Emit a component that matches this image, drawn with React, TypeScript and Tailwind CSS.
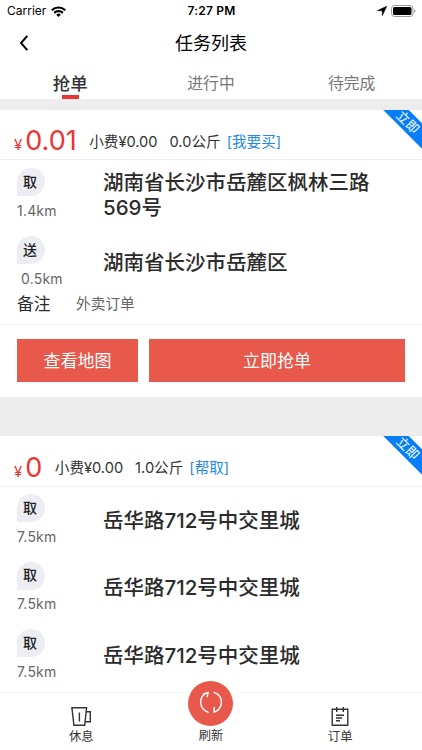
import { useState } from 'react';
import clsx from 'clsx';

type Stop = {
    kind: string;
    distance: string;
    address: string;
};

type Order = {
    id: number;
    price: string;
    tip: string;
    weight: string;
    type: string;
    stops: Stop[];
    remark?: string;
};

const TABS = ['抢单', '进行中', '待完成'];

const ORDERS: Order[] = [
    {
        id: 1,
        price: '0.01',
        tip: '0.00',
        weight: '0.0',
        type: '我要买',
        stops: [
            { kind: '取', distance: '1.4km', address: '湖南省长沙市岳麓区枫林三路569号' },
            { kind: '送', distance: '0.5km', address: '湖南省长沙市岳麓区' },
        ],
        remark: '外卖订单',
    },
    {
        id: 2,
        price: '0',
        tip: '0.00',
        weight: '1.0',
        type: '帮取',
        stops: [
            { kind: '取', distance: '7.5km', address: '岳华路712号中交里城' },
            { kind: '取', distance: '7.5km', address: '岳华路712号中交里城' },
            { kind: '取', distance: '7.5km', address: '岳华路712号中交里城' },
        ],
    },
];

function StatusBar() {
    return (
        <div className="grid h-[22px] shrink-0 grid-cols-3 items-center pl-[7px] pr-[6px] text-black">
            <div className="flex items-center gap-[5px] text-[12px] leading-[22px]">
                Carrier
                <svg width="15" height="11" viewBox="0 0 15 11" fill="none" stroke="currentColor" strokeWidth="2.2">
                    <path d="M0.8 4.2a9.6 9.6 0 0 1 13.4 0" />
                    <path d="M3.2 6.9a6.1 6.1 0 0 1 8.6 0" />
                    <path d="M7.5 11 5.2 8.7a3.2 3.2 0 0 1 4.6 0Z" fill="currentColor" stroke="none" />
                </svg>
            </div>
            <div className="text-center text-[12px] font-semibold leading-[22px] tracking-[0.2px]">7:27 PM</div>
            <div className="flex items-center justify-end gap-[4px]">
                <svg width="10" height="10" viewBox="0 0 10 10" fill="currentColor">
                    <path d="M9.7 0.3 5.4 9.6 5.2 4.8 0.4 4.6Z" stroke="currentColor" strokeWidth="0.6" />
                </svg>
                <svg width="25" height="12" viewBox="0 0 25 12">
                    <rect x="0.5" y="0.5" width="21.5" height="11" rx="3" fill="none" stroke="#999" />
                    <rect x="2" y="2" width="18.5" height="8" rx="1.6" fill="#000" />
                    <path d="M23.2 4v4a2.2 2.2 0 0 0 0-4Z" fill="#999" />
                </svg>
            </div>
        </div>
    );
}

function StopRow({ stop, tall }: { stop: Stop; tall: boolean }) {
    return (
        <div className={clsx('flex', tall ? 'h-[68px]' : 'h-[67.5px]')}>
            <div className="w-[86px] shrink-0">
                <div className="flex h-7 w-7 items-center justify-center rounded-full rounded-bl-[3px] bg-[#edeef3] pb-[2px] pr-[2px] text-[14px] font-medium text-[#222]">
                    {stop.kind}
                </div>
                <div
                    className={clsx(
                        'text-[14px] leading-[20px] tracking-[0.2px] text-[#666]',
                        tall ? 'mt-[5px]' : 'mt-[4.5px]',
                        stop.kind === '送' && 'pl-[4px]'
                    )}
                >
                    {stop.distance}
                </div>
            </div>
            <div className={clsx('w-[275px] text-[20.5px] font-medium leading-[25px] text-[#2b2b2b]', stop.address.length > 13 ? 'pt-[2px]' : 'pt-[13.5px]')}>
                {stop.address}
            </div>
        </div>
    );
}

function OrderCard({ order }: { order: Order }) {
    const hasRemark = Boolean(order.remark);

    return (
        <div className="relative shrink-0 overflow-hidden bg-white">
            <div className={clsx('flex items-center border-b border-[#eee] pl-[14px] pt-[13px]', hasRemark ? 'h-[50px]' : 'h-[51px]')}>
                <div className="flex items-baseline text-[#ed3434]">
                    <span className="mr-[3px] text-[15px]">¥</span>
                    <span className="text-[27px] leading-[36px]">{order.price}</span>
                </div>
                <div className="ml-[12.5px] flex gap-[12px] whitespace-nowrap pt-[3px] text-[14.6px] text-[#333]">
                    <span>小费¥{order.tip}</span>
                    <span>{order.weight}公斤</span>
                </div>
                <span className="ml-[6px] pt-[3px] text-[14.6px] text-[#2289e8]">[{order.type}]</span>
            </div>

            {/* corner ribbon */}
            <div className="absolute right-[-28px] top-[3px] flex h-[18px] w-[84px] rotate-45 items-center justify-center bg-[#087dfa] text-[13px] leading-[13px] text-white">
                立即
            </div>

            <div className={clsx('px-[17px]', hasRemark ? 'pt-2' : 'pt-[7px]')}>
                {order.stops.map((stop, i) => (
                    <StopRow key={i} stop={stop} tall={hasRemark} />
                ))}
            </div>

            {hasRemark && (
                <>
                    <div className="-mt-[11px] flex h-[23px] items-center pl-[17px]">
                        <span className="w-[59px] text-[16.8px] text-[#2b2b2b]">备注</span>
                        <span className="text-[14.7px] text-[#666]">{order.remark}</span>
                    </div>
                    <div className="mt-[8px] flex gap-[11px] border-t border-[#f3f3f3] px-[17px] pb-[15px] pt-[14px]">
                        <button className="h-[43px] w-[121px] bg-[#e8584b] pt-[2px] text-[17px] text-white">查看地图</button>
                        <button className="h-[43px] flex-1 bg-[#e8584b] pt-[2px] text-[17px] text-white">立即抢单</button>
                    </div>
                </>
            )}
        </div>
    );
}

function BottomBar() {
    return (
        <div className="relative grid h-[58px] shrink-0 grid-cols-3 border-t border-[#f2f2f2] bg-white text-[12.3px] leading-[18px] text-[#333]">
            <button className="flex flex-col items-center pl-[22px] pt-[13px]">
                <svg width="22" height="21" viewBox="0 0 22 21" fill="none" stroke="#333" strokeWidth="1.4">
                    <path d="M1.9 1.7H16.6L14.7 19.3H3.9Z" />
                    <path d="M16.1 5.7H20.3V15.8H15.2M9.4 6.5v9" />
                </svg>
                <span className="mt-[1px]">休息</span>
            </button>
            <button className="flex flex-col items-center">
                <span className="-mt-[18px] flex h-[56px] w-[56px] items-center justify-center rounded-full bg-white">
                    <span className="flex h-[45px] w-[45px] items-center justify-center rounded-full bg-[#e8584b]">
                        <svg width="24" height="24" viewBox="0 0 24 24" fill="none" stroke="#fff" strokeWidth="1.4" strokeLinecap="round" strokeLinejoin="round">
                            <path d="M9.2 21.3C-0.8 17.5-0.8 4.5 9.2 1.3M4.4 3 9.2 1.3 8.2 5.6" />
                            <path d="M15 1.3C24.8 4.5 24.8 17.5 15 21.3M15.3 16.4 15 21.3 19.5 19" />
                        </svg>
                    </span>
                </span>
                <span className="-mt-[4px]">刷新</span>
            </button>
            <button className="flex flex-col items-center pr-[23px] pt-[13px]">
                <svg width="18" height="21" viewBox="0 0 18 21" fill="none" stroke="#333" strokeWidth="1.4">
                    <path d="M1.2 3.3H16.8V19.3H1.2ZM5.7 1v5M12.3 1v5M5 9.3h8M5 12h6M5 14.7h4" />
                </svg>
                <span className="mt-[1px]">订单</span>
            </button>
        </div>
    );
}

export default function App() {
    const [active, setActive] = useState(0);

    return (
        <div className="flex h-[750px] w-[422px] flex-col overflow-hidden bg-white font-[Inter,'Noto_Sans_CJK_SC',sans-serif]">
            <StatusBar />
            <header className="grid h-[42px] shrink-0 grid-cols-[60px_1fr_60px] items-center">
                <button className="pl-[19px]">
                    <svg width="10" height="16" viewBox="0 0 10 16" fill="none" stroke="#000" strokeWidth="2">
                        <path d="M8.3 0.8 2 8l6.3 7.2" />
                    </svg>
                </button>
                <h1 className="pt-[2px] text-center text-[18px] leading-[40px] text-black">任务列表</h1>
            </header>
            <nav className="grid h-[35px] shrink-0 grid-cols-3">
                {TABS.map((tab, i) => (
                    <button
                        key={tab}
                        onClick={() => setActive(i)}
                        className={clsx(
                            'flex flex-col items-center pt-[7px] leading-[25px]',
                            active === i ? 'text-[17.5px] font-medium text-[#333]' : 'text-[15.8px] text-[#777]'
                        )}
                    >
                        {tab}
                        {active === i && <span className="-mt-[1.5px] h-[4.5px] w-[17px] shrink-0 bg-[#ed3434]" />}
                    </button>
                ))}
            </nav>
            <main className="flex min-h-0 flex-1 flex-col gap-[39px] overflow-hidden bg-[#ededed] pt-[11px]">
                {ORDERS.map((order) => (
                    <OrderCard key={order.id} order={order} />
                ))}
            </main>
            <BottomBar />
        </div>
    );
}
